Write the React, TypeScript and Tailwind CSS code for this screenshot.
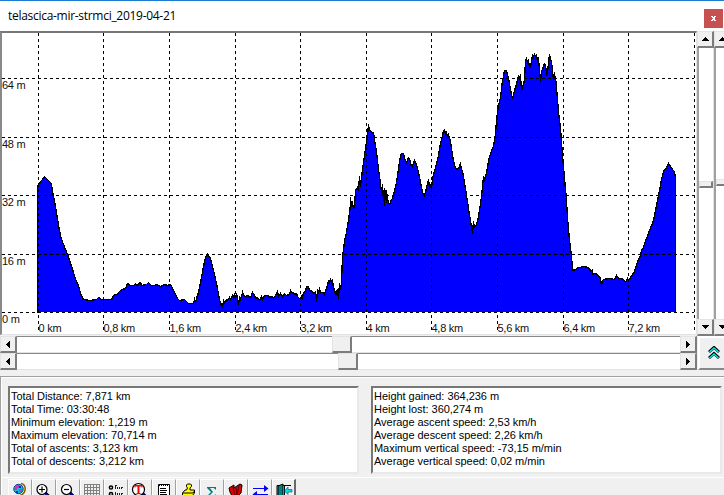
import React from 'react';

const PROFILE =
  '37,312 37,187 38,184 40,181 42,179 44,176 46,178 48,180 50,182 51,184 53,196 55,206 57,218 59,230 61,239 63,244 65,249 67,254 70,263 73,272 75,279 78,285 80,293 83,299 90,300 96,299 98,297 101,299 111,299 113,295 115,294 117,294 118,292 120,290 122,289 125,288 127,283 130,285 133,285 135,283 136,285 140,282 141,285 146,284 148,282 151,285 154,285 156,284 160,286 164,284 167,285 170,284 172,288 174,292 175,294 177,298 179,300 184,299 188,303 193,303 194,299 195,302 196,298 198,292 200,282 203,266 205,257 207,254 210,258 213,270 216,283 219,299 220,304 221,303 222,307 223,300 224,302 226,299 227,300 229,297 230,299 232,295 233,297 234,293 235,299 236,293 237,298 238,304 239,297 240,299 242,292 243,295 245,296 247,295 250,297 251,295 252,291 253,295 254,294 255,298 257,297 259,300 261,296 262,299 264,295 268,295 269,297 272,296 273,298 275,295 277,291 278,296 280,293 282,296 284,293 286,295 289,294 290,290 292,293 293,292 294,294 296,293 297,296 300,299 301,296 302,298 303,292 305,291 306,286 308,286 309,290 312,291 313,293 315,291 316,301 317,290 318,292 319,289 320,292 323,292 324,294 326,288 327,285 328,280 329,284 330,278 331,283 332,279 333,289 334,288 335,295 337,289 338,298 339,283 340,289 341,282 342,256 343,250 344,240 346,232 348,220 350,204 350,197 351,206 352,203 353,208 354,207 355,190 357,187 358,190 359,176 360,186 361,177 363,162 365,148 367,136 368,124 369,130 371,131 372,133 373,132 374,139 376,151 378,169 380,183 381,192 382,184 383,200 384,188 384,205 385,190 386,202 386,190 387,199 389,204 391,199 392,198 394,190 396,182 398,168 400,155 401,153 403,153 404,158 405,160 406,162 408,157 409,158 410,163 412,166 413,163 414,160 416,164 418,172 420,182 422,192 424,195 425,192 426,187 428,179 429,187 430,185 431,188 432,178 435,167 438,155 440,143 442,135 443,130 444,129 445,134 446,132 447,136 448,134 450,141 452,155 454,165 456,169 458,168 460,163 461,169 462,170 464,182 466,195 468,208 470,220 472,233 473,221 474,227 475,226 477,221 479,210 481,196 483,176 484,179 486,173 488,160 490,153 493,146 495,134 496,120 498,105 500,97 502,80 503,76 504,70 506,70 507,74 508,78 510,89 512,98 514,90 516,84 518,75 519,79 520,74 521,91 522,86 523,84 524,79 525,60 526,58 527,62 528,60 529,67 530,67 532,55 533,57 534,53 535,57 536,54 537,60 538,58 539,69 540,81 541,70 542,69 544,63 545,64 546,74 547,72 548,62 549,54 551,62 552,70 553,79 554,74 555,77 557,98 558,112 560,128 562,155 564,178 566,200 567,218 569,240 571,255 572,270 575,269 578,267 584,266 587,267 589,268 590,271 592,269 592,274 594,273 597,274 600,278 601,286 602,280 603,279 608,278 614,279 616,275 618,278 620,278 623,279 625,282 627,278 628,280 630,277 634,271 637,261 640,255 641,250 643,247 646,238 649,230 653,220 656,205 659,190 661,179 663,171 666,167 668,163 670,166 672,169 674,171 675,178 675,312';

const V_LINES = [38, 103, 169, 235, 300, 366, 431, 497, 563, 628, 694];
const H_LINES = [78, 137, 195, 254, 312];
const KM_LABELS = ['0 km', '0,8 km', '1,6 km', '2,4 km', '3,2 km', '4 km', '4,8 km', '5,6 km', '6,4 km', '7,2 km'];
const M_LABELS = ['64 m', '48 m', '32 m', '16 m', '0 m'];

const LEFT_STATS = [
  'Total Distance: 7,871 km',
  'Total Time: 03:30:48',
  'Minimum elevation: 1,219 m',
  'Maximum elevation: 70,714 m',
  'Total of ascents: 3,123 km',
  'Total of descents: 3,212 km',
];

const RIGHT_STATS = [
  'Height gained: 364,236 m',
  'Height lost: 360,274 m',
  'Average ascent speed: 2,53 km/h',
  'Average descent speed: 2,26 km/h',
  'Maximum vertical speed: -73,15 m/min',
  'Average vertical speed: 0,02 m/min',
];

const RAISED =
  'bg-[#f0f0f0] border-t border-l border-t-[#e3e3e3] border-l-[#e3e3e3] border-r-2 border-b-2 border-r-[#7c7c7c] border-b-[#7c7c7c]';

type Direction = 'up' | 'down' | 'left' | 'right';

const ARROWS: Record<Direction, string> = {
  up: 'M3 0h1v1h1v1h1v1h1v1H0V3h1V2h1V1h1z',
  down: 'M0 0h7v1H6v1H5v1H4v1H3V3H2V2H1V1H0z',
  left: 'M3 0h1v7H3V6H2V5H1V4H0V3h1V2h1V1h1z',
  right: 'M0 0h1v1h1v1h1v1h1v1H3v1H2v1H1v1H0z',
};

function ArrowButton({ dir }: { dir: Direction }) {
  const vertical = dir === 'up' || dir === 'down';
  return (
    <button className={`flex h-[17px] w-[17px] shrink-0 items-center justify-center ${RAISED}`}>
      <svg width={vertical ? 7 : 4} height={vertical ? 4 : 7} shapeRendering="crispEdges">
        <path d={ARROWS[dir]} fill="#000" />
      </svg>
    </button>
  );
}

function VScroll({ thumb }: { thumb: string }) {
  return (
    <div className="flex h-[305px] w-[17px] shrink-0 flex-col bg-white">
      <ArrowButton dir="up" />
      <div className="flex-1 border-r border-l-2 border-r-[#e3e3e3] border-l-[#a0a0a0]">
        <div className={`h-[7px] ${thumb} ${RAISED}`} />
      </div>
      <ArrowButton dir="down" />
    </div>
  );
}

function HScroll({ thumb }: { thumb: string }) {
  return (
    <div className="flex h-[17px] w-[697px] bg-white">
      <ArrowButton dir="left" />
      <div className="flex-1 border-t border-b border-t-[#888] border-b-[#e3e3e3]">
        <div className={`-mt-px h-[17px] w-[20px] ${thumb} ${RAISED}`} />
      </div>
      <ArrowButton dir="right" />
    </div>
  );
}

function Chart() {
  return (
    <div className="h-[304px] w-[697px] shrink-0 border-t-2 border-r border-b border-l-2 border-t-[#777] border-r-[#e3e3e3] border-b-[#e3e3e3] border-l-[#888] bg-white">
      <svg width="694" height="301" viewBox="2 33 694 301" className="block">
        <g shapeRendering="crispEdges">
          <polygon points={PROFILE} fill="#0000ff" />
          <polyline points={PROFILE} fill="none" stroke="#000" strokeWidth="1.3" transform="translate(.5 .5)" />
          {V_LINES.map((x) => (
            <path key={x} d={`M${x + 0.5} 33V333`} stroke="#000" strokeDasharray="3 3" />
          ))}
          {H_LINES.map((y) => (
            <path key={y} d={`M2 ${y + 0.5}H694`} stroke="#000" strokeDasharray="3 3" />
          ))}
        </g>
        <g fontFamily="'Liberation Sans', Arial, sans-serif" fontSize="11" letterSpacing="-0.25" fill="#111">
          {M_LABELS.map((label, i) => (
            <text key={label} x="2" y={H_LINES[i] + 11}>{label}</text>
          ))}
          {KM_LABELS.map((label, i) => (
            <text key={label} x={V_LINES[i] + 0.5} y="332">{label}</text>
          ))}
        </g>
      </svg>
    </div>
  );
}

function StatsBox({ lines }: { lines: string[] }) {
  return (
    <div className="h-[88px] w-[351px] shrink-0 border-2 border-t-[#777] border-r-[#e9e9e9] border-b-[#e9e9e9] border-l-[#777] bg-white pl-[1px] pt-[2px]">
      {lines.map((line) => (
        <div key={line} className="h-[13px] text-[11px] leading-[13px] tracking-[-0.04px] whitespace-nowrap">
          {line}
        </div>
      ))}
    </div>
  );
}

function Lens({ cx, r = 5, children }: { cx: number; r?: number; children?: React.ReactNode }) {
  return (
    <>
      <path d={`M${cx + 3} 11.500l6 6`} stroke="#0000c8" strokeWidth="3" />
      <path d={`M${cx + 4} 11l6 6`} stroke="#000" strokeWidth="1" />
      <circle cx={cx} cy="8.500" r={r} fill="#fff" stroke="#000" strokeWidth="1.200" />
      {children}
    </>
  );
}

const TOOL_ICONS: React.ReactNode[] = [
  <>
    <path d="M13 2.500q5 1 4 7-1 4-6 5.500" fill="none" stroke="#806000" strokeWidth="1.500" />
    <path d="M10 14h4v3h-4z" fill="#c0a000" />
    <circle cx="10.500" cy="8" r="4.700" fill="#00c8d8" stroke="#203080" />
    <path d="M8 4h3v3H9v2H7V6h1zM12 8h2v3h-3V9h1z" fill="#d030c0" />
    <path d="M11 5h2v2h-2zM8 10h2v2H8z" fill="#0030c0" />
  </>,
  <Lens cx={10}><path d="M7 8.500h6M10 5.500v6" stroke="#000" strokeWidth="1.200" /></Lens>,
  <Lens cx={10.5}><path d="M8 8.500h5" stroke="#000" strokeWidth="1.200" /></Lens>,
  <path
    d="M4 3.500h16M4 6.500h16M4 9.500h16M4 12.500h16M4 15.500h16M4.500 3v14M7.500 3v14M10.500 3v14M13.500 3v14M16.500 3v14M19.500 3v14"
    stroke="#808080"
    shapeRendering="crispEdges"
  />,
  <>
    <circle cx="7" cy="6.500" r="1.600" fill="none" stroke="#000" strokeWidth="1.500" />
    <circle cx="7" cy="13" r="1.600" fill="none" stroke="#000" strokeWidth="1.500" />
    <path d="M11.500 4v4M11 4.500h2M11 6.500h1M13.500 6v2M15.500 5.500v2M17.500 8V6h1.500M11.500 11v4M13.500 12v2M15.500 12v2M17.500 14v-2h1.500" stroke="#0000ff" shapeRendering="crispEdges" />
  </>,
  <Lens cx={10.5} r={6}><path d="M6.500 4h8v2.500h-1V5.500h-2V12h1v1h-4v-1h1V5.500h-2v1h-1z" fill="#f00" /></Lens>,
  <>
    <path d="M6.500 3.500h11v14h-11z" fill="#fff" stroke="#000" />
    <path d="M7 4h10" stroke="#000" strokeWidth="2" strokeDasharray="1 1" />
    <path d="M8 7.500h6M8 9.500h7M8 11.500h6M8 13.500h7M8 15.500h6" stroke="#000" shapeRendering="crispEdges" />
  </>,
  <>
    <path d="M10.500 9l1-2-1-1.500V4l1-1h3l1 1v1.500L14 7v2h4.500v3l-2 2.500h-10V12l2.500-3z" fill="#ffff00" stroke="#000" />
    <path d="M7 12h10l1.500-2M8 15.500h8" fill="none" stroke="#000" />
  </>,
  <path d="M7 6h9v2.500h-1L14 7h-4l3 4-4 4h5l1-1.500h1V16H7v-1l4-4-4-4z" fill="#008080" />,
  <>
    <path d="M5 7l5-3v3l6-4 2 1-1 8-4 4-5-1-2-4z" fill="#e00000" stroke="#000" />
    <path d="M9 6l2 8M12 6l1 9M15 4l-2 10" stroke="#600000" fill="none" />
  </>,
  <>
    <path d="M5 7.500h14M6 13.500h14" stroke="#0000ff" strokeWidth="1.200" />
    <path d="M16 4l4.500 3.500L16 11V4zM9 10v7l-4.500-3.500z" fill="#0000ff" />
  </>,
  <>
    <path d="M5 4.500h14M12.500 4v13M5 4.500v12" stroke="#000" fill="none" />
    <path d="M6 5l5-2v14H6z" fill="#008080" stroke="#000" />
    <path d="M20 8.500h-4V6l-3.500 4 3.500 3.500V11h4z" fill="#00e0ff" stroke="#005050" strokeWidth=".6" />
    <path d="M14 15.500h6" stroke="#808080" />
  </>,
];

export default function App() {
  return (
    <div className="flex h-[495px] w-[724px] flex-col overflow-hidden bg-[#f0f0f0] font-['Liberation_Sans',Arial,sans-serif] text-black">
      <div className="flex h-[31px] shrink-0 items-center justify-between border-t border-[#1b7cd3] bg-white pl-2 pr-[1px]">
        <span className="font-['Open_Sans','Noto_Sans',sans-serif] text-[12px] leading-4 tracking-[-0.29px]">
          telascica-mir-strmci_2019-04-21
        </span>
        <button className="mt-1 flex h-[19px] w-[19px] items-center justify-center bg-[#c75050]">
          <svg width="5" height="5" shapeRendering="crispEdges">
            <path d="M0 0h2v1h1V0h2v1H4v1H3.500v1H4v1h1v1H3V4H2v1H0V4h1V3h.5V2H1V1H0z" fill="#fff" />
          </svg>
        </button>
      </div>

      <div className="flex h-[305px] shrink-0">
        <Chart />
        <VScroll thumb="mt-[133px]" />
        <VScroll thumb="mt-[131px]" />
      </div>

      <div className="flex h-[34px] shrink-0">
        <div className="w-[697px] shrink-0">
          <HScroll thumb="ml-[315px]" />
          <HScroll thumb="ml-[321px]" />
        </div>
        <button className="ml-px flex h-[34px] w-[34px] shrink-0 items-center justify-center border-2 border-t-white border-r-[#777] border-b-[#888] border-l-white bg-[#f0f0f0]">
          <svg width="12" height="14" viewBox="0 0 12 14" className="mr-[2px]">
            <path d="M1 6l5-4.500L11 6M1 12l5-4.500 5 4.500" fill="none" stroke="#000" strokeWidth="3" />
            <path d="M1.500 6L6 2l4.500 4M1.500 12L6 8l4.500 4" fill="none" stroke="#00e5e5" strokeWidth="1.600" />
          </svg>
        </button>
      </div>

      <div className="mt-[6px] flex flex-1 flex-col border-t border-l border-[#a0a0a0] shadow-[inset_1px_1px_0_#fff]">
        <div className="flex gap-3 pl-[7px] pt-[9px]">
          <StatsBox lines={LEFT_STATS} />
          <StatsBox lines={RIGHT_STATS} />
        </div>
        <div className="mt-[3px] flex h-[18px] border-t border-white pl-[7px]">
          {TOOL_ICONS.map((icon, i) => (
            <button
              key={i}
              className={`mt-px h-[20px] w-6 shrink-0 border-t border-l border-r border-t-white border-l-white bg-[#f0f0f0] ${
                i === TOOL_ICONS.length - 1 ? 'border-r-2 border-r-[#696969]' : 'border-r-[#a0a0a0]'
              }`}
            >
              <svg width="24" height="17" viewBox="0 0 24 17" className="-ml-px -mt-px block">
                {icon}
              </svg>
            </button>
          ))}
        </div>
      </div>
    </div>
  );
}
